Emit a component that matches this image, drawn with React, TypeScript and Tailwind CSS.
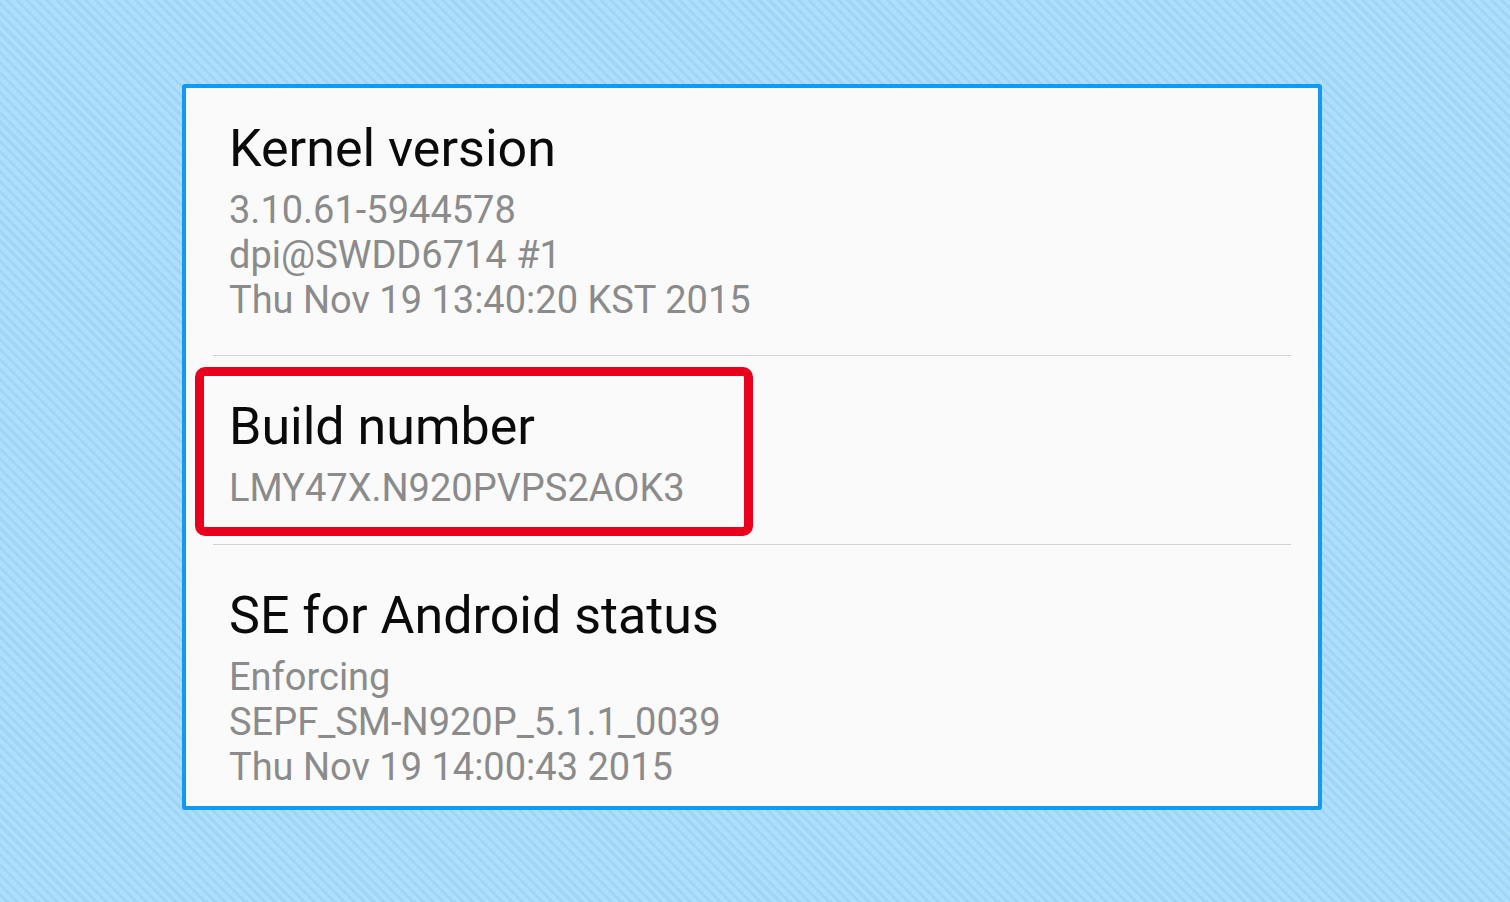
import React from 'react'

const items = [
  { title: 'Kernel version', lines: ['3.10.61-5944578', 'dpi@SWDD6714 #1', 'Thu Nov 19 13:40:20 KST 2015'], pt: 'pt-[31px]', pb: 'pb-[32px]' },
  { title: 'Build number', lines: ['LMY47X.N920PVPS2AOK3'], pt: 'pt-[41px]', pb: 'pb-[33px]' },
  { title: 'SE for Android status', lines: ['Enforcing', 'SEPF_SM-N920P_5.1.1_0039', 'Thu Nov 19 14:00:43 2015'], pt: 'pt-[41px]', pb: 'pb-[16px]' },
]

export default function App() {
  return (
    <div
      className="w-full h-[902px] overflow-hidden pt-[84px] pl-[182px] bg-[#abdffc] bg-[image:repeating-linear-gradient(45deg,#abdffc_0px,#abdffc_4px,#a2d5f5_4px,#a2d5f5_7px)]"
      style={{ fontFamily: 'Roboto, "Noto Sans", sans-serif' }}
    >
      <div className="relative w-[1140px] h-[726px] overflow-hidden rounded-[3px] border-4 border-[#1199f6] bg-[#fafafa]">
        {items.map((it, i) => (
          <div key={it.title}>
            {i > 0 && <div className="mx-[27px] h-px bg-[#d2d2d2]" />}
            <div className={`pl-[43px] ${it.pt} ${it.pb}`}>
              <div className="text-[52px] leading-[60px] text-[#0a0a0a]">{it.title}</div>
              <div className="mt-[9px]">
                {it.lines.map(l => (
                  <div key={l} className="text-[38px] leading-[45px] text-[#8b8b8b]">{l}</div>
                ))}
              </div>
            </div>
          </div>
        ))}
        <div className="absolute left-[9px] top-[279px] w-[558px] h-[169px] rounded-[10px] border-[9px] border-[#e8001d]" />
      </div>
    </div>
  )
}
